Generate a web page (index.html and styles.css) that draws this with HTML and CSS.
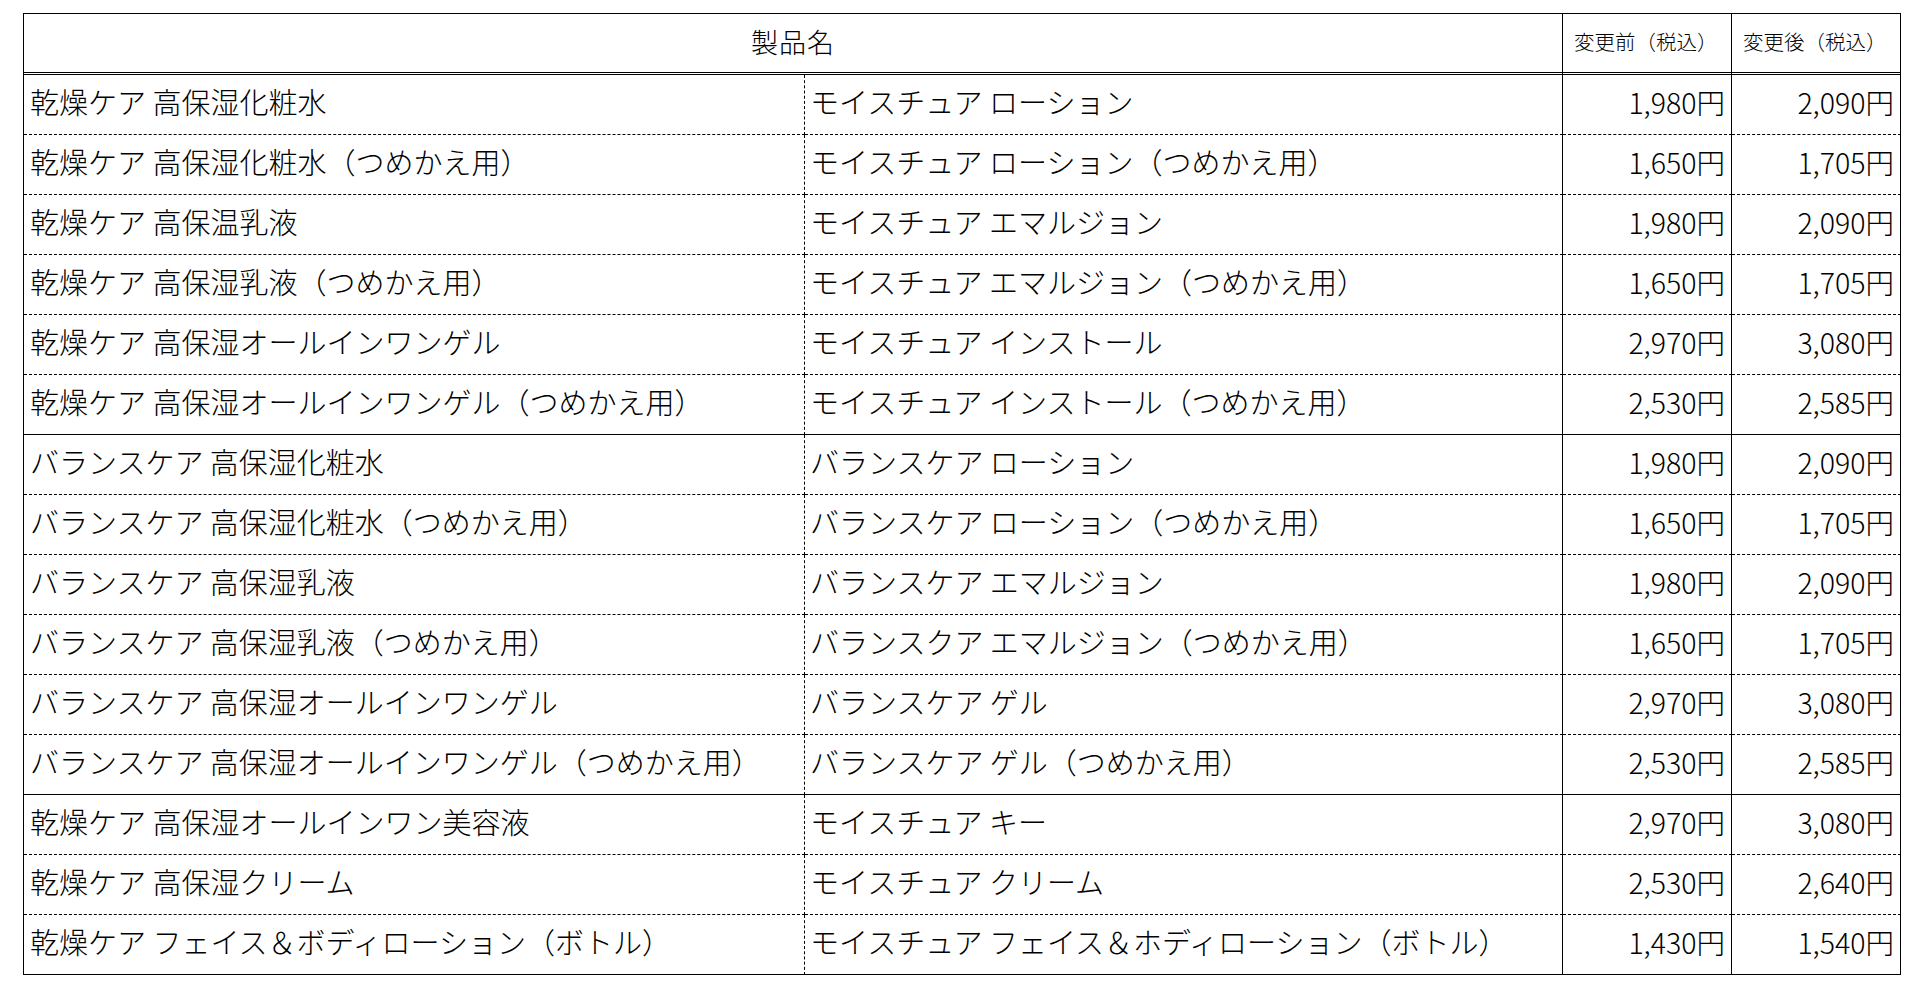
FILE: index.html
```html
<!DOCTYPE html>
<html lang="ja">
<head>
<meta charset="utf-8">
<title>価格改定表</title>
<link rel="stylesheet" href="styles.css">
</head>
<body>
<div class="page">
<table class="price-table">
  <colgroup>
    <col class="c-name">
    <col class="c-alt">
    <col class="c-price">
    <col class="c-price">
  </colgroup>
  <thead>
    <tr>
      <th colspan="2" class="th-name">製品名</th>
      <th class="th-price"><span class="w">変更前</span><span class="w">（税込）</span></th>
      <th class="th-price"><span class="w">変更後</span><span class="w">（税込）</span></th>
    </tr>
  </thead>
  <tbody>
    <tr><td class="name"><span class="w">乾燥ケア</span> <span class="w">高保湿化粧水</span></td><td class="alt"><span class="w">モイスチュア</span> <span class="w">ローション</span></td><td class="price">1,980円</td><td class="price">2,090円</td></tr>
    <tr><td class="name"><span class="w">乾燥ケア</span> <span class="w">高保湿化粧水</span><span class="w">（つめかえ用）</span></td><td class="alt"><span class="w">モイスチュア</span> <span class="w">ローション</span><span class="w">（つめかえ用）</span></td><td class="price">1,650円</td><td class="price">1,705円</td></tr>
    <tr><td class="name"><span class="w">乾燥ケア</span> <span class="w">高保温乳液</span></td><td class="alt"><span class="w">モイスチュア</span> <span class="w">エマルジョン</span></td><td class="price">1,980円</td><td class="price">2,090円</td></tr>
    <tr><td class="name"><span class="w">乾燥ケア</span> <span class="w">高保湿乳液</span><span class="w">（つめかえ用）</span></td><td class="alt"><span class="w">モイスチュア</span> <span class="w">エマルジョン</span><span class="w">（つめかえ用）</span></td><td class="price">1,650円</td><td class="price">1,705円</td></tr>
    <tr><td class="name"><span class="w">乾燥ケア</span> <span class="w">高保湿オールインワンゲル</span></td><td class="alt"><span class="w">モイスチュア</span> <span class="w">インストール</span></td><td class="price">2,970円</td><td class="price">3,080円</td></tr>
    <tr class="group-end"><td class="name"><span class="w">乾燥ケア</span> <span class="w">高保湿オールインワンゲル</span><span class="w">（つめかえ用）</span></td><td class="alt"><span class="w">モイスチュア</span> <span class="w">インストール</span><span class="w">（つめかえ用）</span></td><td class="price">2,530円</td><td class="price">2,585円</td></tr>
    <tr><td class="name"><span class="w">バランスケア</span> <span class="w">高保湿化粧水</span></td><td class="alt"><span class="w">バランスケア</span> <span class="w">ローション</span></td><td class="price">1,980円</td><td class="price">2,090円</td></tr>
    <tr><td class="name"><span class="w">バランスケア</span> <span class="w">高保湿化粧水</span><span class="w">（つめかえ用）</span></td><td class="alt"><span class="w">バランスケア</span> <span class="w">ローション</span><span class="w">（つめかえ用）</span></td><td class="price">1,650円</td><td class="price">1,705円</td></tr>
    <tr><td class="name"><span class="w">バランスケア</span> <span class="w">高保湿乳液</span></td><td class="alt"><span class="w">バランスケア</span> <span class="w">エマルジョン</span></td><td class="price">1,980円</td><td class="price">2,090円</td></tr>
    <tr><td class="name"><span class="w">バランスケア</span> <span class="w">高保湿乳液</span><span class="w">（つめかえ用）</span></td><td class="alt"><span class="w">バランスクア</span> <span class="w">エマルジョン</span><span class="w">（つめかえ用）</span></td><td class="price">1,650円</td><td class="price">1,705円</td></tr>
    <tr><td class="name"><span class="w">バランスケア</span> <span class="w">高保湿オールインワンゲル</span></td><td class="alt"><span class="w">バランスケア</span> <span class="w">ゲル</span></td><td class="price">2,970円</td><td class="price">3,080円</td></tr>
    <tr class="group-end"><td class="name"><span class="w">バランスケア</span> <span class="w">高保湿オールインワンゲル</span><span class="w">（つめかえ用）</span></td><td class="alt"><span class="w">バランスケア</span> <span class="w">ゲル</span><span class="w">（つめかえ用）</span></td><td class="price">2,530円</td><td class="price">2,585円</td></tr>
    <tr><td class="name"><span class="w">乾燥ケア</span> <span class="w">高保湿オールインワン美容液</span></td><td class="alt"><span class="w">モイスチュア</span> <span class="w">キー</span></td><td class="price">2,970円</td><td class="price">3,080円</td></tr>
    <tr><td class="name"><span class="w">乾燥ケア</span> <span class="w">高保湿クリーム</span></td><td class="alt"><span class="w">モイスチュア</span> <span class="w">クリーム</span></td><td class="price">2,530円</td><td class="price">2,640円</td></tr>
    <tr class="last"><td class="name"><span class="w">乾燥ケア</span> <span class="w">フェイス＆ボディローション</span><span class="w">（ボトル）</span></td><td class="alt"><span class="w">モイスチュア</span> <span class="w">フェイス＆ホディローション</span><span class="w">（ボトル）</span></td><td class="price">1,430円</td><td class="price">1,540円</td></tr>
  </tbody>
</table>
</div>
</body>
</html>
```
FILE: styles.css
```css
html, body {
  margin: 0;
  padding: 0;
  background: #ffffff;
}

.page {
  padding: 13px 0 0 23px;
}

.price-table {
  border-collapse: separate;
  border-spacing: 0;
  table-layout: fixed;
  width: 1878px;
  border-top: 1px solid #000;
  border-left: 1px solid #000;
  font-family: "Noto Sans CJK JP", "Noto Sans", sans-serif;
  font-weight: 300;
  color: #000;
}

.c-name { width: 781px; }
.c-alt { width: 758px; }
.c-price { width: 169px; }

.price-table th,
.price-table td {
  box-sizing: border-box;
  padding: 0;
  vertical-align: middle;
  white-space: nowrap;
  overflow: hidden;
}

.price-table th {
  height: 61px;
  font-weight: 300;
  padding-bottom: 4px;
  border-right: 1px solid #000;
  border-bottom: 3px double #000;
}

.th-name {
  font-size: 27px;
  text-align: center;
  letter-spacing: 1px;
}

.price-table th.th-price {
  font-size: 20.5px;
  text-align: left;
  padding-left: 11px;
}

.price-table td {
  height: 60px;
  font-size: 29px;
  padding-bottom: 7px;
  border-bottom: 1px dashed #000;
  border-right: 1px solid #000;
}

.w {
  display: inline;
}

.price-table tr.group-end td,
.price-table tr.last td {
  border-bottom: 1px solid #000;
}

.price-table td.name {
  border-right: 1px dashed #000;
  padding-left: 6px;
}

.price-table td.alt {
  padding-left: 5px;
}

.price-table td.price {
  font-size: 28.5px;
  text-align: right;
  padding-right: 6px;
}
```
